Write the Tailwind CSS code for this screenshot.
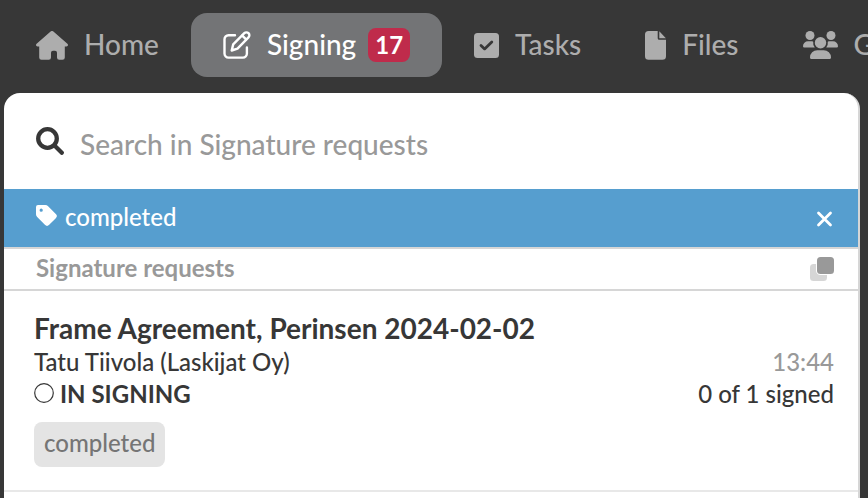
<!DOCTYPE html>
<html lang="en">
<head>
    <meta charset="UTF-8">
    <meta name="viewport" content="width=device-width, initial-scale=1.0">
    <title>Signature requests</title>
    <script src="https://cdn.jsdelivr.net/npm/@tailwindcss/browser@4"></script>
</head>
<body class="bg-[#373737] font-['Lato',sans-serif] font-medium text-[#373737] min-h-screen flex flex-col overflow-x-hidden">

    <!-- Main navigation -->
    <nav class="flex pl-1 py-[13px] mb-[3px] overflow-hidden whitespace-nowrap text-[28px] leading-8 text-[#adadad]">
        <a href="#" class="flex shrink-0 items-center h-16 px-8 gap-4 rounded-2xl">
            <svg class="w-8 h-[29px]" viewBox="0 0 32 29" fill="currentColor" aria-hidden="true">
                <path d="M14.6.6a2 2 0 0 1 2.8 0l14 12.2c1.100 1 .5 2.700-1 2.700h-1.600v11a2.300 2.300 0 0 1-2.300 2.300h-3.200a2.300 2.300 0 0 1-2.300-2.300v-4.700a2 2 0 0 0-2-2h-2a2 2 0 0 0-2 2v4.700a2.300 2.300 0 0 1-2.300 2.300H5.500a2.300 2.300 0 0 1-2.300-2.300v-11H1.600c-1.500 0-2.100-1.700-1-2.700z"/>
            </svg>
            <span class="pb-[2px]">Home</span>
        </a>
        <a href="#" aria-current="page" class="flex shrink-0 items-center h-16 px-8 gap-4 rounded-2xl bg-[#737476] text-white">
            <svg class="w-7 h-7" viewBox="0 0 28 28" fill="none" stroke="currentColor" stroke-width="2.400" stroke-linecap="round" stroke-linejoin="round" aria-hidden="true">
                <path d="M12 4.200H5.500a4 4 0 0 0-4 4v14.400a4 4 0 0 0 4 4h14.400a4 4 0 0 0 4-4V16.500"/>
                <path d="M8.700 19.500l1.500-6.100L21.300 2.200a2.900 2.900 0 0 1 4.200 4.200L14.500 17.600z"/>
                <path d="M19.300 4.600l3.800 3.800"/>
            </svg>
            <span class="flex items-center gap-3">
                <span class="pb-[2px]">Signing</span>
                <span class="flex items-center h-[34px] px-[7px] rounded-lg bg-[#bf2b4b] text-2xl font-bold">17</span>
            </span>
        </a>
        <a href="#" class="flex shrink-0 items-center h-16 px-8 gap-4 rounded-2xl">
            <svg class="w-[25px] h-[25px]" viewBox="0 0 25 25" aria-hidden="true">
                <rect width="25" height="25" rx="3.500" fill="currentColor"/>
                <path d="M7 12.500l3.600 3.400L17.800 9" fill="none" stroke="#373737" stroke-width="2.800" stroke-linecap="round" stroke-linejoin="round"/>
            </svg>
            <span class="pb-[2px]">Tasks</span>
        </a>
        <a href="#" class="flex shrink-0 items-center h-16 px-8 gap-4 rounded-2xl">
            <svg class="w-[21px] h-[29px]" viewBox="0 0 21 29" fill="currentColor" aria-hidden="true">
                <path d="M3.600 0H12.700v7.300a1.500 1.500 0 0 0 1.500 1.500H21v16.400a3.600 3.600 0 0 1-3.600 3.600H3.600A3.600 3.600 0 0 1 0 25.200V3.600A3.600 3.600 0 0 1 3.600 0z"/>
                <path d="M14.300.2L20.900 7.200h-6.600z"/>
            </svg>
            <span class="pb-[2px]">Files</span>
        </a>
        <a href="#" class="flex shrink-0 items-center h-16 px-8 gap-4 rounded-2xl">
            <svg class="w-[35px] h-7" viewBox="0 0 35 28" fill="currentColor" aria-hidden="true">
                <circle cx="7" cy="4.500" r="4.500"/>
                <circle cx="28" cy="4.500" r="4.500"/>
                <circle cx="17.500" cy="11.800" r="5.700"/>
                <path d="M1.200 16.500A1.200 1.200 0 0 1 0 15.300a5 5 0 0 1 5-5h3.300c.7 0 1.300.1 1.900.4a7.500 7.500 0 0 0 1.600 5.800z"/>
                <path d="M33.800 16.500a1.200 1.200 0 0 0 1.200-1.200 5 5 0 0 0-5-5h-3.300c-.7 0-1.300.1-1.900.4a7.500 7.500 0 0 1-1.600 5.800z"/>
                <path d="M14.300 19.200h6.400a7.300 7.300 0 0 1 7.300 7.300c0 .8-.6 1.500-1.400 1.500H8.400c-.8 0-1.400-.7-1.400-1.500a7.300 7.300 0 0 1 7.300-7.300z"/>
            </svg>
            <span class="pb-[2px]">Groups</span>
        </a>
    </nav>

    <main class="grow ml-1 mr-2 bg-white border-r-2 border-[#d6d6d6] rounded-t-2xl overflow-hidden">

        <!-- Search -->
        <label class="flex items-center h-24 px-8 gap-4">
            <svg class="w-7 h-7 shrink-0" viewBox="0 0 28 28" fill="none" stroke="currentColor" aria-hidden="true">
                <circle cx="11.500" cy="11.500" r="9.300" stroke-width="4.300"/>
                <path d="M18.500 18.500l7.300 7.300" stroke-width="4.200" stroke-linecap="round"/>
            </svg>
            <input type="text" aria-label="Search in Signature requests" placeholder="Search in Signature requests" class="grow min-w-0 h-12 pt-[6px] text-[28px] outline-none placeholder:text-[#999999]">
        </label>

        <!-- Active tag filter -->
        <div class="flex items-center justify-between h-[60px] pl-8 pr-6 bg-[#569ecf] border-b-2 border-[#d6d6d6] text-white text-2xl">
            <span class="flex items-center gap-2 pb-[2px]">
                <svg class="w-[21px] h-[21px] mb-1" viewBox="0 0 21 21" fill="currentColor" fill-rule="evenodd" aria-hidden="true">
                    <path d="M0 2v7.300c0 1 .4 2 1.200 2.800l7.700 7.700a3 3 0 0 0 4.300 0l6.600-6.600a3 3 0 0 0 0-4.300L12.100 1.200A4 4 0 0 0 9.300 0H2a2 2 0 0 0-2 2zM5.200 3.600a1.600 1.600 0 1 1 0 3.200 1.600 1.600 0 0 1 0-3.200z"/>
                </svg>
                completed
            </span>
            <button type="button" aria-label="Remove filter" class="pt-[2px] cursor-pointer">
                <svg class="w-[18px] h-[18px]" viewBox="0 0 18 18" fill="none" stroke="currentColor" stroke-width="2.800" stroke-linecap="round" aria-hidden="true">
                    <path d="M2.500 3l12 12M14.500 3l-12 12"/>
                </svg>
            </button>
        </div>

        <div class="flex items-center justify-between h-[42px] pl-8 pr-6 border-b-2 border-[#d6d6d6]">
            <h1 class="pb-[2px] text-2xl leading-8 font-bold text-[#999999]">Signature requests</h1>
            <button type="button" aria-label="Select several" class="cursor-pointer">
                <svg class="w-6 h-6" viewBox="0 0 24 24" aria-hidden="true">
                    <rect y="7" width="17" height="17" rx="3.500" fill="#d6d6d6"/>
                    <rect x="6" y="-1" width="19" height="19" rx="4.500" fill="#ffffff"/>
                    <rect x="7" width="17" height="17" rx="3.500" fill="#999999"/>
                </svg>
            </button>
        </div>

        <ul>
            <li class="pl-[30px] pr-6 pt-[19px] pb-[23px] border-b-2 border-[#e8e8e8] text-2xl leading-8">
                <h2 class="text-[28px] leading-9 font-bold">Frame Agreement, Perinsen 2024-02-02</h2>
                <div class="flex justify-between">
                    <span>Tatu Tiivola (Laskijat Oy)</span>
                    <time class="text-[#999999]">13:44</time>
                </div>
                <div class="flex justify-between">
                    <span class="flex items-center gap-[6px] font-bold">
                        <svg class="w-5 h-5 mb-[2px]" viewBox="0 0 20 20" fill="none" stroke="currentColor" aria-hidden="true">
                            <circle cx="10" cy="10" r="9.300" stroke-width="1.200"/>
                        </svg>
                        IN SIGNING
                    </span>
                    <span>0 of 1 signed</span>
                </div>
                <div class="flex pt-3">
                    <a href="#" class="flex items-center h-[45px] px-[10px] pb-1 rounded-lg bg-[#e4e4e4] text-[#757575]">completed</a>
                </div>
            </li>
        </ul>

    </main>

</body>
</html>
